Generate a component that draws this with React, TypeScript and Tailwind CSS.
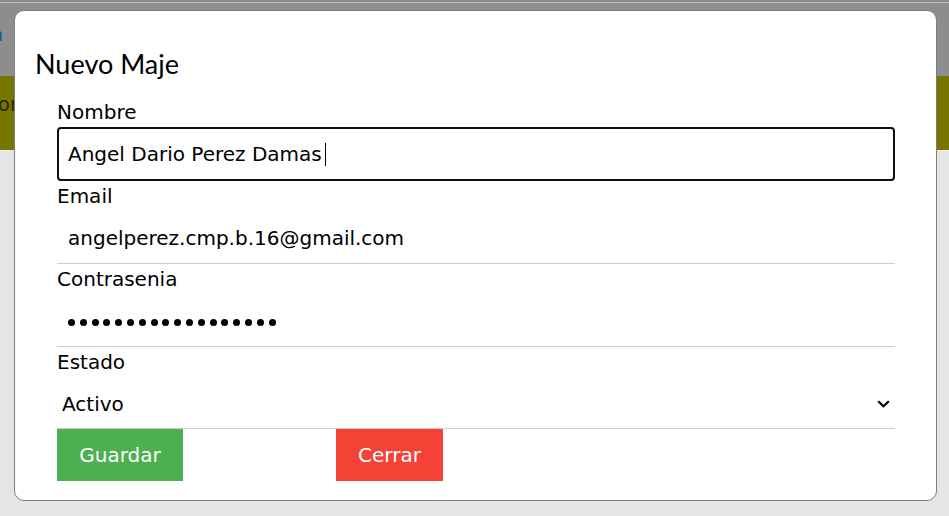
import { useState } from "react";

const dv = { fontFamily: '"DejaVu Sans", Verdana, sans-serif' };

function Field({ label, children }: { label: string; children: React.ReactNode }) {
    return (
        <div className="flex flex-col mb-[5px]">
            <label className="h-[24px] leading-[20px] text-[20px] text-black" style={dv}>
                {label}
            </label>
            {children}
        </div>
    );
}

export default function App() {
    const [estado] = useState("Activo");
    const dots = Array.from({ length: 18 });

    return (
        <div className="relative w-[949px] h-[516px] overflow-hidden bg-[#e5e5e5]" style={dv}>
            {/* page behind the overlay */}
            <div className="h-[2px] bg-[#8a8a8a]" />
            <div className="h-[1px] bg-[#bdbdbd]" />
            <div className="h-[73px] bg-[#8d8d8d] pt-[19px] overflow-hidden">
                <span className="block -ml-[9px] text-[20px] leading-[24px] text-[#1d5a86]">a</span>
            </div>
            <div className="h-[74px] bg-[#767600] pt-[16px] overflow-hidden">
                <span className="block -ml-[36px] text-[20px] leading-[24px] text-[#262600]">Favor</span>
            </div>
            <div className="h-[1px] bg-[#eeeeee]" />

            {/* Modal */}
            <div className="absolute left-[14px] top-[10px] w-[923px] h-[491px] bg-white border border-[#7d7d7d] rounded-[10px]">
                <h2
                    className="pt-[37px] pl-[20px] h-[69px] text-[27px] leading-[32px] font-normal text-black"
                    style={{ fontFamily: "Lato, 'Segoe UI', sans-serif" }}
                >
                    Nuevo Maje
                </h2>

                <div className="pl-[42px] pr-[41px] pt-[22px]">
                    <Field label="Nombre">
                        <div className="mt-[1px] h-[54px] border-2 border-[#101010] rounded-[4px] pl-[9px] flex items-center">
                            <span className="text-[20px] leading-[24px] text-black">Angel Dario Perez Damas</span>
                            <span className="ml-[3px] w-[1px] h-[23px] bg-black" />
                        </div>
                    </Field>

                    <Field label="Email">
                        <input
                            readOnly
                            type="email"
                            value="angelperez.cmp.b.16@gmail.com"
                            className="h-[54px] w-full pt-[3px] pl-[11px] border-b border-[#cccccc] text-[20px] text-black outline-none"
                            style={dv}
                        />
                    </Field>

                    <Field label="Contrasenia">
                        <div className="h-[54px] pt-[5px] pl-[11px] border-b border-[#cccccc] flex items-center gap-[4.8px]">
                            {dots.map((_, i) => (
                                <span key={i} className="w-[7px] h-[7px] rounded-full bg-black" />
                            ))}
                        </div>
                    </Field>

                    <div className="flex flex-col">
                        <label className="h-[24px] leading-[20px] text-[20px] text-black">Estado</label>
                        <div className="h-[53px] pt-[4px] border-b border-[#cccccc] pl-[5px] pr-[5px] flex items-center justify-between">
                            <span className="text-[20px] leading-[24px] text-black">{estado}</span>
                            <svg width="13" height="8" viewBox="0 0 13 8" fill="none">
                                <path d="M1.2 1.2 6.5 6.3 11.8 1.2" stroke="#000" strokeWidth="2.2" />
                            </svg>
                        </div>
                    </div>

                    <div className="flex">
                        <button className="h-[52px] w-[126px] bg-[#4caf50] text-white text-[20px]" style={dv}>
                            Guardar
                        </button>
                        <button className="ml-[153px] h-[52px] w-[107px] bg-[#f44336] text-white text-[20px]" style={dv}>
                            Cerrar
                        </button>
                    </div>
                </div>
            </div>
        </div>
    );
}
